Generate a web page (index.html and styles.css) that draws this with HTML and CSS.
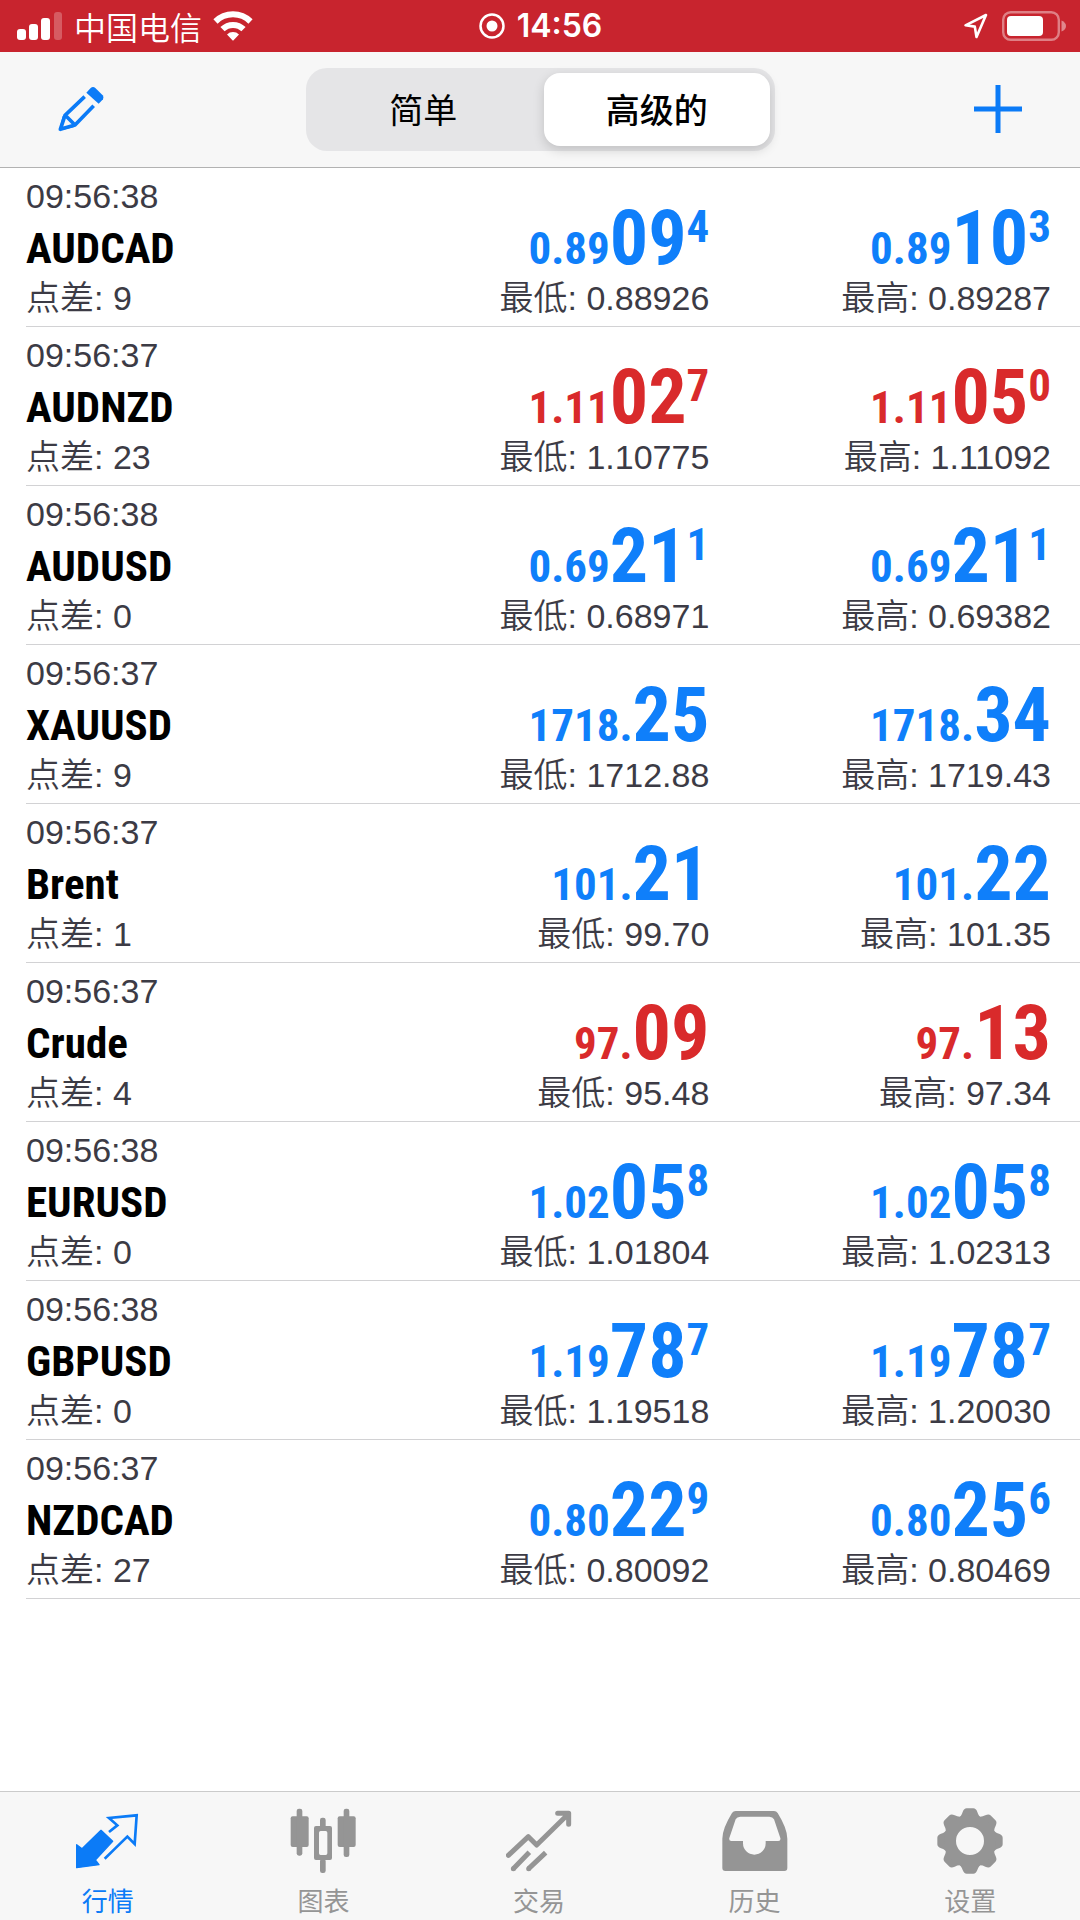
FILE: index.html
```html
<!DOCTYPE html>
<html lang="zh-CN">
<head>
<meta charset="utf-8">
<meta name="viewport" content="width=device-width, initial-scale=1">
<title>行情</title>
<link rel="stylesheet" href="styles.css">
</head>
<body>
<div class="status">
  <div class="status-side">
    <svg class="signal" width="46" height="30" viewBox="0 0 46 30" fill="#fff"><rect x="0" y="18" width="9" height="11" rx="3"/><rect x="12" y="13" width="9" height="16" rx="3"/><rect x="24" y="7" width="9" height="22" rx="3"/><rect x="37" y="1" width="8" height="28" rx="3" opacity=".25"/></svg>
    <span class="carrier">中国电信</span>
    <svg width="40" height="30" viewBox="0 0 40 30"><g fill="none" stroke="#fff" stroke-width="6"><path d="M2.500 10.500a25 25 0 0 1 35 0"/><path d="M9.500 18.200a15 15 0 0 1 21 0"/></g><path fill="#fff" d="M14 23.500a8.500 8.500 0 0 1 12 0L20.800 29a1 1 0 0 1-1.600 0z"/></svg>
  </div>
  <div class="clock">
    <svg width="26" height="26" viewBox="0 0 26 26"><circle cx="13" cy="13" r="11.500" fill="none" stroke="#fff" stroke-width="2.500"/><circle cx="13" cy="13" r="5.500" fill="#fff"/></svg>
    <span>14:56</span>
  </div>
  <div class="status-side status-right">
    <svg width="24" height="26" viewBox="0 0 24 26"><path d="M22 2 12.500 24 10.800 13.600 1.500 12.300z" fill="none" stroke="#fff" stroke-width="2.600" stroke-linejoin="round"/></svg>
    <svg width="64" height="30" viewBox="0 0 64 30"><rect x="1.200" y="1.200" width="55.600" height="27.600" rx="7.500" fill="none" stroke="#fff" stroke-opacity=".42" stroke-width="2.400"/><rect x="5" y="5" width="36" height="20" rx="4" fill="#fff"/><path d="M59.500 9.500q4.500 2 4.500 5.500t-4.500 5.500z" fill="#fff" opacity=".45"/></svg>
  </div>
</div>

<header class="toolbar">
  <button class="tool" type="button" aria-label="编辑">
    <svg width="48" height="48" viewBox="174 252 144 144"><path d="M254 287 195 343 181 385 225 372 281 314M195 342 225 372" fill="none" stroke="#0b7bf7" stroke-width="11" stroke-linejoin="round"/><path d="M192 346 182 384 220 375" fill="none" stroke="#0b7bf7" stroke-width="8" stroke-linejoin="round"/><path d="M259 275 272 261Q279 255 286 261L308 283Q313 289 309 295L296 308z" fill="#0b7bf7"/></svg>
  </button>
  <div class="segmented">
    <button class="segment" type="button" aria-pressed="false">简单</button>
    <button class="segment segment-on" type="button" aria-pressed="true">高级的</button>
  </div>
  <button class="tool" type="button" aria-label="添加">
    <svg width="48" height="48" viewBox="0 0 48 48"><path d="M0 24H48M24 0V48" stroke="#0b7bf7" stroke-width="5"/></svg>
  </button>
</header>

<main class="content">
<table class="quotes">
<tbody>
<tr class="quote up">
  <th class="name" scope="row"><div class="note">09:56:38</div><div class="symbol">AUDCAD</div><div class="note">点差: 9</div></th>
  <td class="side"><div class="price"><span class="lead">0.89</span>09<sup class="point">4</sup></div><div class="note">最低: 0.88926</div></td>
  <td class="side"><div class="price"><span class="lead">0.89</span>10<sup class="point">3</sup></div><div class="note">最高: 0.89287</div></td>
</tr>
<tr class="quote down">
  <th class="name" scope="row"><div class="note">09:56:37</div><div class="symbol">AUDNZD</div><div class="note">点差: 23</div></th>
  <td class="side"><div class="price"><span class="lead">1.11</span>02<sup class="point">7</sup></div><div class="note">最低: 1.10775</div></td>
  <td class="side"><div class="price"><span class="lead">1.11</span>05<sup class="point">0</sup></div><div class="note">最高: 1.11092</div></td>
</tr>
<tr class="quote up">
  <th class="name" scope="row"><div class="note">09:56:38</div><div class="symbol">AUDUSD</div><div class="note">点差: 0</div></th>
  <td class="side"><div class="price"><span class="lead">0.69</span>21<sup class="point">1</sup></div><div class="note">最低: 0.68971</div></td>
  <td class="side"><div class="price"><span class="lead">0.69</span>21<sup class="point">1</sup></div><div class="note">最高: 0.69382</div></td>
</tr>
<tr class="quote up">
  <th class="name" scope="row"><div class="note">09:56:37</div><div class="symbol">XAUUSD</div><div class="note">点差: 9</div></th>
  <td class="side"><div class="price"><span class="lead">1718.</span>25</div><div class="note">最低: 1712.88</div></td>
  <td class="side"><div class="price"><span class="lead">1718.</span>34</div><div class="note">最高: 1719.43</div></td>
</tr>
<tr class="quote up">
  <th class="name" scope="row"><div class="note">09:56:37</div><div class="symbol">Brent</div><div class="note">点差: 1</div></th>
  <td class="side"><div class="price"><span class="lead">101.</span>21</div><div class="note">最低: 99.70</div></td>
  <td class="side"><div class="price"><span class="lead">101.</span>22</div><div class="note">最高: 101.35</div></td>
</tr>
<tr class="quote down">
  <th class="name" scope="row"><div class="note">09:56:37</div><div class="symbol">Crude</div><div class="note">点差: 4</div></th>
  <td class="side"><div class="price"><span class="lead">97.</span>09</div><div class="note">最低: 95.48</div></td>
  <td class="side"><div class="price"><span class="lead">97.</span>13</div><div class="note">最高: 97.34</div></td>
</tr>
<tr class="quote up">
  <th class="name" scope="row"><div class="note">09:56:38</div><div class="symbol">EURUSD</div><div class="note">点差: 0</div></th>
  <td class="side"><div class="price"><span class="lead">1.02</span>05<sup class="point">8</sup></div><div class="note">最低: 1.01804</div></td>
  <td class="side"><div class="price"><span class="lead">1.02</span>05<sup class="point">8</sup></div><div class="note">最高: 1.02313</div></td>
</tr>
<tr class="quote up">
  <th class="name" scope="row"><div class="note">09:56:38</div><div class="symbol">GBPUSD</div><div class="note">点差: 0</div></th>
  <td class="side"><div class="price"><span class="lead">1.19</span>78<sup class="point">7</sup></div><div class="note">最低: 1.19518</div></td>
  <td class="side"><div class="price"><span class="lead">1.19</span>78<sup class="point">7</sup></div><div class="note">最高: 1.20030</div></td>
</tr>
<tr class="quote up">
  <th class="name" scope="row"><div class="note">09:56:37</div><div class="symbol">NZDCAD</div><div class="note">点差: 27</div></th>
  <td class="side"><div class="price"><span class="lead">0.80</span>22<sup class="point">9</sup></div><div class="note">最低: 0.80092</div></td>
  <td class="side"><div class="price"><span class="lead">0.80</span>25<sup class="point">6</sup></div><div class="note">最高: 0.80469</div></td>
</tr>
</tbody>
</table>
</main>

<nav class="tabs">
  <a class="tab tab-on" href="#quotes" aria-current="page">
    <svg width="66" height="66" viewBox="225 84 198 198"><path fill="currentColor" stroke="currentColor" stroke-width="4" stroke-linejoin="round" d="M230 194 246 206 303 151 338 184 286 240 297 254 230 263z"/><path fill="none" stroke="currentColor" stroke-width="8" d="M327 156 352 136 327 114 410 106 404 192 382 170 342 209 314 236"/></svg>
    <span>行情</span>
  </a>
  <a class="tab" href="#charts">
    <svg width="66" height="66" viewBox="873 84 198 198"><g fill="currentColor"><rect x="875" y="109" width="54" height="92" rx="6"/><rect x="893" y="86" width="17" height="141" rx="7"/><rect x="1016" y="109" width="54" height="92" rx="6"/><rect x="1034" y="86" width="17" height="145" rx="7"/><rect x="963" y="113" width="17" height="30" rx="7"/><rect x="963" y="236" width="17" height="43" rx="7"/><path fill-rule="evenodd" d="M951 138h42q6 0 6 6v90q0 6-6 6h-42q-6 0-6-6v-90q0-6 6-6zM965 153q-5 0-5 5v62q0 5 5 5h15q5 0 5-5v-62q0-5-5-5z"/></g></svg>
    <span>图表</span>
  </a>
  <a class="tab" href="#trade">
    <svg width="66" height="66" viewBox="319 84 198 198"><g fill="none" stroke="currentColor" stroke-width="15" stroke-linejoin="round"><path stroke-linecap="round" d="M326 226 386 170 411 195 506 102M474 100H507V133"/><path d="M389 217 341 266M438 218 387 266"/></g><circle cx="341" cy="266" r="7.500" fill="currentColor"/><circle cx="387" cy="266" r="7.500" fill="currentColor"/></svg>
    <span>交易</span>
  </a>
  <a class="tab" href="#history">
    <svg width="66" height="66" viewBox="65 84 198 198"><path fill="currentColor" fill-rule="evenodd" d="M106 93H221Q228 93 232 99 261 146 261 176V264Q261 273 252 273H75Q66 273 66 264V176Q66 146 95 99 99 93 106 93zM120 110Q110 110 106 118L87 174Q85 183 93 183H128V190A34 34 0 0 0 196 190V183H234Q242 183 240 174L221 118Q217 110 207 110z"/></svg>
    <span>历史</span>
  </a>
  <a class="tab" href="#settings">
    <svg width="66" height="66" viewBox="-99 -99 198 198"><defs><path id="tooth" d="M-37 -68Q-26 -73-22 -87-18 -98-10 -98H10Q18 -98 22 -87 26 -73 37 -68z"/></defs><g fill="currentColor"><use href="#tooth"/><use href="#tooth" transform="rotate(45)"/><use href="#tooth" transform="rotate(90)"/><use href="#tooth" transform="rotate(135)"/><use href="#tooth" transform="rotate(180)"/><use href="#tooth" transform="rotate(225)"/><use href="#tooth" transform="rotate(270)"/><use href="#tooth" transform="rotate(315)"/></g><circle r="60" fill="none" stroke="currentColor" stroke-width="36"/></svg>
    <span>设置</span>
  </a>
</nav>
</body>
</html>
```
FILE: styles.css
```css
* {
  box-sizing: border-box;
}

body {
  display: flex;
  flex-direction: column;
  min-height: 100vh;
  margin: 0;
  background: #fff;
  color: #000;
  font-family: "Liberation Sans", "Noto Sans CJK SC", sans-serif;
}

svg {
  display: block;
  flex: none;
}

button {
  padding: 0;
  border: 0;
  background: none;
  color: inherit;
  font: inherit;
}

/* Status bar */
.status {
  display: grid;
  grid-template-columns: 1fr auto 1fr;
  align-items: center;
  height: 52px;
  padding: 0 14px 0 17px;
  background: #c8242e;
  color: #fff;
}

.status-side {
  display: flex;
  align-items: center;
  gap: 11px;
}

.status-right {
  justify-content: flex-end;
  gap: 14px;
}

.carrier {
  font-family: "Noto Sans CJK SC", sans-serif;
  font-size: 32px;
  font-weight: 350;
  line-height: 50px;
}

.clock {
  display: flex;
  align-items: center;
  gap: 12px;
  padding-right: 2px;
  font-family: Inter, sans-serif;
  font-size: 32px;
  font-weight: 600;
  line-height: 52px;
}

/* Toolbar */
.toolbar {
  display: flex;
  align-items: center;
  justify-content: space-between;
  height: 116px;
  padding: 0 58px;
  border-bottom: 1px solid #b2b2b2;
  background: #f7f7f7;
}

.tool {
  padding-bottom: 2px;
}

.segmented {
  display: grid;
  grid-template-columns: 1fr 1fr;
  gap: 8px;
  width: 469px;
  padding: 5px;
  border-radius: 21px;
  background: #e5e5e7;
}

.segment {
  height: 73px;
  padding-bottom: 2px;
  border-radius: 16px;
  font-family: "Noto Sans CJK SC", sans-serif;
  font-size: 34px;
}

.segment-on {
  background: #fff;
  box-shadow: 0 4px 12px rgba(0, 0, 0, .16);
  font-weight: 500;
}

/* Quotes */
.content {
  flex: 1;
}

.quotes,
.quotes tbody {
  display: block;
}

.quote {
  display: grid;
  grid-template-columns: 1fr 1fr 1fr;
  margin-left: 26px;
  padding: 8px 29px 10px 0;
  border-bottom: 1px solid #d2d2d4;
}

.name {
  padding: 0;
  font-weight: 400;
  text-align: left;
}

.side {
  display: flex;
  flex-direction: column;
  justify-content: flex-end;
  padding: 0;
  text-align: right;
}

.note {
  color: #3c3b45;
  font-size: 34px;
  font-weight: 350;
  line-height: 36px;
}

.note:first-child {
  line-height: 40px;
}

.symbol,
.price {
  font-family: "Roboto Condensed", "Liberation Sans", sans-serif;
  font-weight: 700;
  line-height: 64px;
}

.symbol {
  font-size: 43px;
}

.price {
  margin-bottom: 10px;
  font-size: 76px;
  white-space: nowrap;
}

.lead,
.point {
  font-size: 45px;
  line-height: 0;
}

.point {
  vertical-align: 22px;
}

.up .price {
  color: #0f7ffa;
}

.down .price {
  color: #d92a2b;
}

/* Tab bar */
.tabs {
  display: grid;
  grid-template-columns: repeat(5, 1fr);
  height: 129px;
  padding-right: 2px;
  border-top: 1px solid #cbcbcb;
  background: #f7f7f7;
}

.tab {
  display: flex;
  flex-direction: column;
  align-items: center;
  gap: 8px;
  padding-top: 16px;
  color: #959595;
  font-family: "Noto Sans CJK SC", sans-serif;
  font-size: 26px;
  line-height: 36px;
  text-decoration: none;
}

.tab-on {
  color: #0b7bf7;
}
```
